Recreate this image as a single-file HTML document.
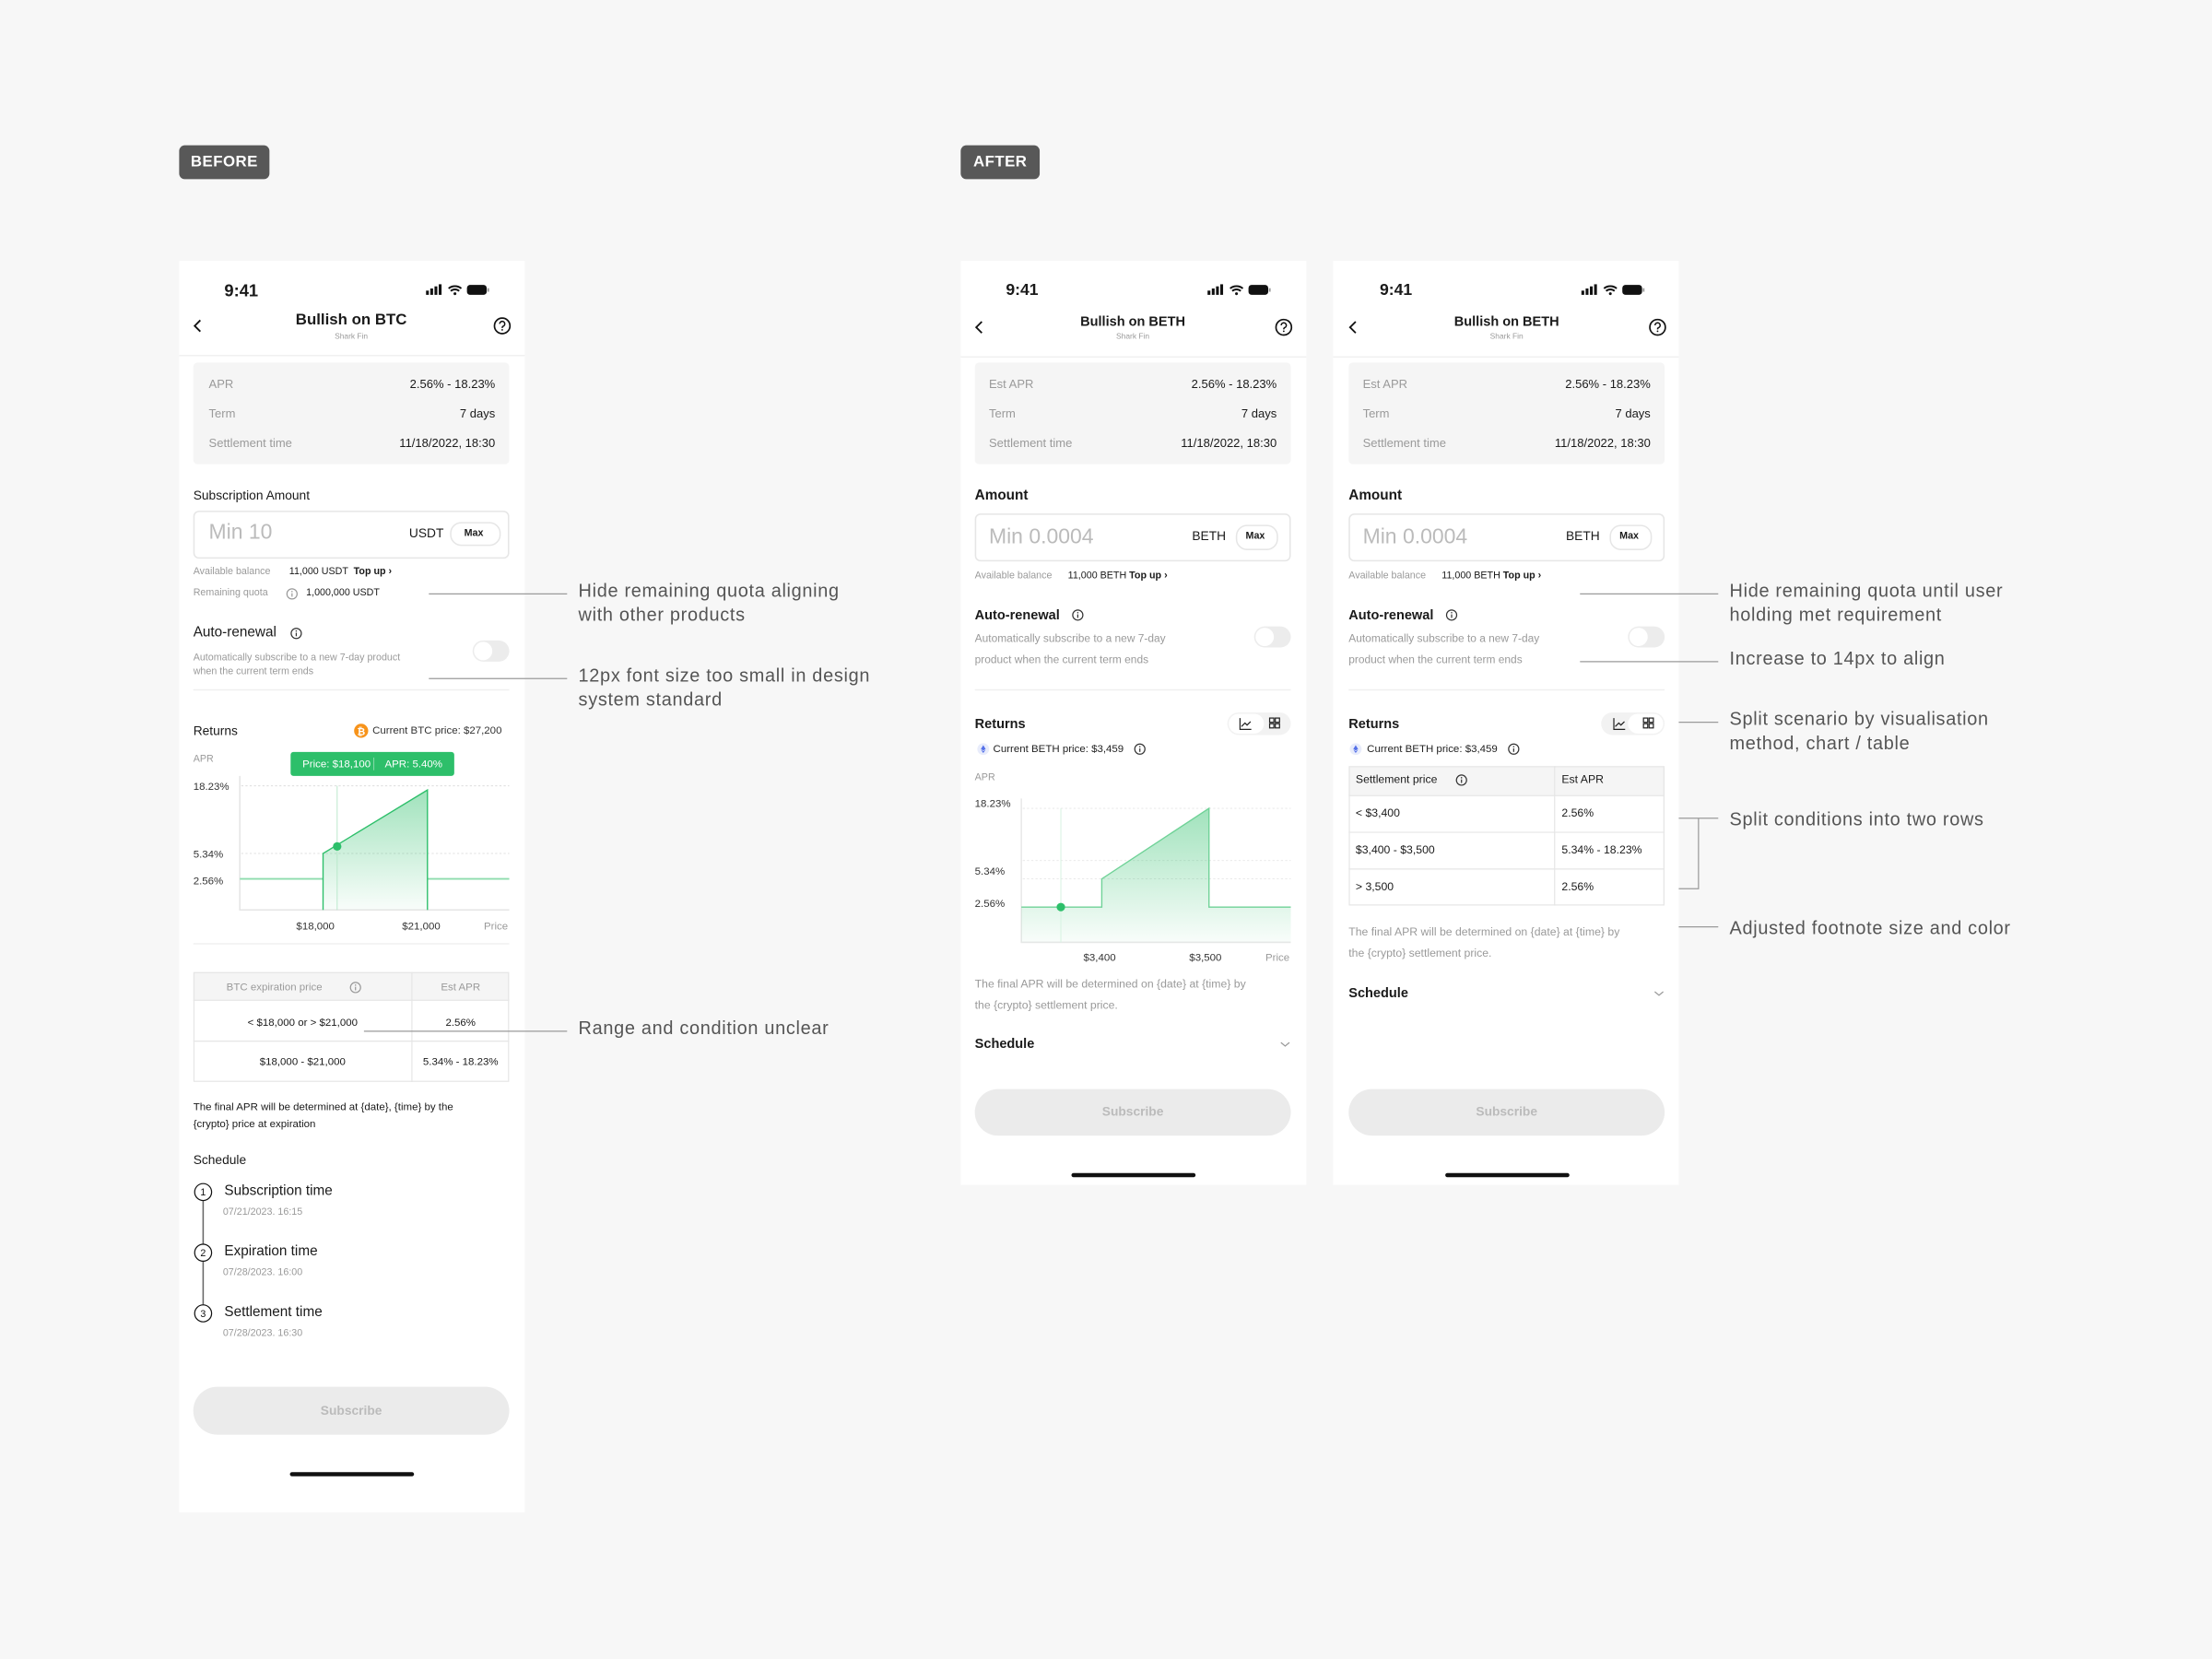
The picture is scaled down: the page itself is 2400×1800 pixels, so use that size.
<!DOCTYPE html>
<html><head><meta charset="utf-8">
<style>
html,body{margin:0;padding:0;background:#f7f7f7;}
#wrap{position:relative;width:2400px;height:1800px;overflow:hidden;background:#f7f7f7;}
#pg{position:absolute;left:0;top:0;width:1568px;height:1176px;transform:scale(1.530612);transform-origin:0 0;font-family:"Liberation Sans",Arial,sans-serif;color:#1a1a1a;}
.t{position:absolute;white-space:nowrap;line-height:1;}
.ph{position:absolute;background:#fff;}
.g{color:#9a9a9a;}
.b{font-weight:bold;}
.r{text-align:right;}
.c{text-align:center;}
.ann{position:absolute;font-size:13px;color:#555;line-height:17px;letter-spacing:0.45px;white-space:nowrap;}
</style></head><body>
<div id="wrap"><div id="pg">

<div style="position:absolute;left:127px;top:103px;width:64px;height:24px;background:#585858;border-radius:4px;color:#fff;font-weight:bold;font-size:11px;line-height:25px;text-align:center;letter-spacing:0.3px">BEFORE</div>
<div style="position:absolute;left:681px;top:103px;width:56px;height:24px;background:#585858;border-radius:4px;color:#fff;font-weight:bold;font-size:11px;line-height:25px;text-align:center;letter-spacing:0.3px">AFTER</div>

<div class="ph" style="left:127px;top:185px;width:245px;height:887px"></div>
<div class="ph" style="left:681px;top:185px;width:245px;height:655px"></div>
<div class="ph" style="left:945px;top:185px;width:245px;height:655px"></div>

<div style="position:absolute;left:137px;top:257px;width:224px;height:72px;background:#f5f5f5;border-radius:3px"></div>
<div style="position:absolute;left:691px;top:257px;width:224px;height:72px;background:#f5f5f5;border-radius:3px"></div>
<div style="position:absolute;left:956px;top:257px;width:224px;height:72px;background:#f5f5f5;border-radius:3px"></div>
<div style="position:absolute;left:137px;top:362px;width:222px;height:32px;border:1px solid #e6e6e6;border-radius:4px"></div>
<div style="position:absolute;left:319px;top:370px;width:34px;height:15px;border:1px solid #e6e6e6;border-radius:8px"></div>
<div style="position:absolute;left:691px;top:364px;width:222px;height:32px;border:1px solid #e6e6e6;border-radius:4px"></div>
<div style="position:absolute;left:876px;top:372px;width:28px;height:16px;border:1px solid #e6e6e6;border-radius:8px"></div>
<div style="position:absolute;left:956px;top:364px;width:222px;height:32px;border:1px solid #e6e6e6;border-radius:4px"></div>
<div style="position:absolute;left:1141px;top:372px;width:28px;height:16px;border:1px solid #e6e6e6;border-radius:8px"></div>
<div style="position:absolute;left:335px;top:454px;width:26px;height:15px;background:#ececec;border-radius:8px"><div style="position:absolute;left:1px;top:1px;width:13px;height:13px;border-radius:50%;background:#fff"></div></div>
<div style="position:absolute;left:889px;top:444px;width:26px;height:15px;background:#ececec;border-radius:8px"><div style="position:absolute;left:1px;top:1px;width:13px;height:13px;border-radius:50%;background:#fff"></div></div>
<div style="position:absolute;left:1154px;top:444px;width:26px;height:15px;background:#ececec;border-radius:8px"><div style="position:absolute;left:1px;top:1px;width:13px;height:13px;border-radius:50%;background:#fff"></div></div>
<div style="position:absolute;left:870px;top:505px;width:45px;height:16px;background:#f2f2f2;border-radius:8px"><div style="position:absolute;left:1px;top:1px;width:25px;height:14px;background:#fff;border-radius:7px"></div></div>
<div style="position:absolute;left:1135px;top:505px;width:45px;height:16px;background:#f2f2f2;border-radius:8px"><div style="position:absolute;left:19px;top:1px;width:25px;height:14px;background:#fff;border-radius:7px"></div></div>
<div style="position:absolute;left:206px;top:533px;width:116px;height:17px;background:#2dbf6a;border-radius:2px"></div>
<div style="position:absolute;left:137px;top:689px;width:224px;height:20px;background:#f5f5f5"></div>
<div style="position:absolute;left:956px;top:543px;width:224px;height:21px;background:#f5f5f5"></div>
<div style="position:absolute;left:137px;top:983px;width:224px;height:34px;background:#ebebeb;border-radius:17px"></div>
<div style="position:absolute;left:691px;top:772px;width:224px;height:33px;background:#ebebeb;border-radius:17px"></div>
<div style="position:absolute;left:956px;top:772px;width:224px;height:33px;background:#ebebeb;border-radius:17px"></div>

<svg style="position:absolute;left:0;top:0" width="1568" height="1176" viewBox="0 0 1568 1176">
<defs>
<linearGradient id="gr" x1="0" y1="0" x2="0" y2="1"><stop offset="0" stop-color="#2dbf6a" stop-opacity="0.45"/><stop offset="1" stop-color="#2dbf6a" stop-opacity="0.03"/></linearGradient>
<g id="status"><rect x="0" y="4" width="2" height="3" fill="#111"/><rect x="3" y="2.5" width="2" height="4.5" fill="#111"/><rect x="6" y="1" width="2" height="6" fill="#111"/><rect x="9" y="-0.5" width="2" height="7.5" fill="#111"/>
<path d="M16 2.5a7 7 0 0 1 9 0M17.5 4.3a4.5 4.5 0 0 1 6 0" stroke="#111" stroke-width="1.3" fill="none"/><circle cx="20.5" cy="6.2" r="1" fill="#111"/>
<rect x="29" y="0" width="14" height="7" rx="2.2" fill="#111"/><rect x="43.5" y="2.3" width="1.2" height="2.5" fill="#999"/></g>
<g id="help"><circle r="5.5" fill="none" stroke="#111" stroke-width="1.1"/><path d="M-1.8 -1.4a1.8 1.8 0 1 1 2.4 1.7c-0.6 0.3-0.6 0.6-0.6 1.2" fill="none" stroke="#111" stroke-width="1"/><circle cx="0" cy="2.8" r="0.6" fill="#111"/></g>
<g id="info"><circle r="3.6" fill="none" stroke="#333" stroke-width="0.8"/><path d="M0 -0.5V2" stroke="#333" stroke-width="0.8"/><circle cy="-1.7" r="0.5" fill="#333"/></g>
<g id="infog"><circle r="3.6" fill="none" stroke="#999" stroke-width="0.8"/><path d="M0 -0.5V2" stroke="#999" stroke-width="0.8"/><circle cy="-1.7" r="0.5" fill="#999"/></g>
<g id="eth"><circle r="4.2" fill="#e8ecfb"/><path d="M0 -2.8L-1.7 0L0 1L1.7 0Z M-1.7 0.5L0 2.8L1.7 0.5L0 1.5Z" fill="#5470e8"/></g>
</defs>
<use href="#status" x="302" y="202"/>
<use href="#status" x="856" y="202"/>
<use href="#status" x="1121" y="202"/>
<path d="M142 227l-4 4 4 4" stroke="#111" stroke-width="1.2" fill="none"/>
<path d="M696 228l-4 4 4 4" stroke="#111" stroke-width="1.2" fill="none"/>
<path d="M961 228l-4 4 4 4" stroke="#111" stroke-width="1.2" fill="none"/>
<use href="#help" x="356" y="231"/>
<use href="#help" x="910" y="232"/>
<use href="#help" x="1175" y="232"/>
<path d="M127 252H372M681 253H926M945 253H1190" stroke="#f0f0f0" stroke-width="1"/>
<path d="M137 489H361M137 669H361M691 489H915M956 489H1180" stroke="#f0f0f0" stroke-width="1"/>

<use href="#infog" x="207" y="421"/>
<use href="#info" x="210" y="449"/>
<use href="#info" x="764" y="436"/>
<use href="#info" x="1029" y="436"/>
<use href="#infog" x="252" y="700"/>
<use href="#info" x="808" y="531"/>
<use href="#info" x="1073" y="531"/>
<use href="#info" x="1036" y="553"/>
<use href="#eth" x="697" y="531"/>
<use href="#eth" x="961" y="531"/>
<circle cx="256" cy="518" r="5" fill="#f7931a"/>
<text x="256" y="521" font-size="7" font-weight="bold" fill="#fff" text-anchor="middle" font-family="Liberation Sans">₿</text>

<g stroke="#222" stroke-width="0.8" fill="none">
<path d="M879 509v8h8M880 515l2.5-2.5 1.5 1.5 2.5-2.5"/>
<rect x="900" y="509" width="3" height="3"/><rect x="904" y="509" width="3" height="3"/><rect x="900" y="513" width="3" height="3"/><rect x="904" y="513" width="3" height="3"/>
<path d="M1144 509v8h8M1145 515l2.5-2.5 1.5 1.5 2.5-2.5"/>
<rect x="1165" y="509" width="3" height="3"/><rect x="1169" y="509" width="3" height="3"/><rect x="1165" y="513" width="3" height="3"/><rect x="1169" y="513" width="3" height="3"/>
</g>

<path d="M170 550V645H361" stroke="#e5e5e5" stroke-width="1" fill="none"/>
<path d="M171 557H361M171 605H361" stroke="#e0e0e0" stroke-width="0.7" stroke-dasharray="1.5 1.5"/>
<path d="M229 645V605L303 560V645Z" fill="url(#gr)"/>
<path d="M170 623H229M303 623H361" stroke="#8fdcae" stroke-width="1.2" fill="none"/>
<path d="M229 645V605L303 560V645" stroke="#2dbf6a" stroke-width="0.9" fill="none"/>
<path d="M239 557V645" stroke="#b6e8c9" stroke-width="0.6"/>
<circle cx="239" cy="600" r="3" fill="#2dbf6a"/>
<path d="M265 537V546" stroke="#8fdcae" stroke-width="0.6"/>

<path d="M724 566V668H915" stroke="#e8e8e8" stroke-width="1" fill="none"/>
<path d="M725 573H915M725 610H915M725 623H915" stroke="#e6e6e6" stroke-width="0.6" stroke-dasharray="1.5 1.5"/>
<path d="M724 668V643H781V623L857 573V643H915V668Z" fill="url(#gr)"/>
<path d="M724 643H781V623L857 573V643H915" stroke="#6fd297" stroke-width="0.9" fill="none"/>
<path d="M752 573V668" stroke="#d5f2e0" stroke-width="0.6"/>
<circle cx="752" cy="643" r="3" fill="#2dbf6a"/>

<g stroke="#e6e6e6" stroke-width="0.8" fill="none">
<rect x="137.5" y="689.5" width="223" height="77"/>
<path d="M292 689V767M137 709H361M137 738H361"/>
<rect x="956.5" y="543.5" width="223" height="98"/>
<path d="M1102 543V642M956 564H1180M956 590H1180M956 616H1180"/>
</g>

<path d="M144 851V882M144 894V925" stroke="#666" stroke-width="1"/>
<g fill="#fff" stroke="#111" stroke-width="0.8"><circle cx="144" cy="845" r="6"/><circle cx="144" cy="888" r="6"/><circle cx="144" cy="931" r="6"/></g>
<g font-family="Liberation Sans" font-size="7" text-anchor="middle" fill="#111"><text x="144" y="847.5">1</text><text x="144" y="890.5">2</text><text x="144" y="933.5">3</text></g>

<path d="M908 739l3 2.5 3-2.5M1173 703l3 2.5 3-2.5" stroke="#999" stroke-width="0.8" fill="none"/>
<path d="M207 1045H292M761 833H846M1026 833H1111" stroke="#111" stroke-width="3" stroke-linecap="round"/>

<g stroke="#9a9a9a" stroke-width="0.8" fill="none">
<path d="M304 421H402M304 481H402M258 731H402"/>
<path d="M1120 421H1218M1120 469H1218M1190 512H1218M1190 580H1218M1204 580V630H1190M1190 657H1218"/>
</g>
</svg>

<!-- BEFORE -->
<div class="t b" style="left:159px;top:200px;font-size:12px">9:41</div>
<div class="t b c" style="left:180px;width:138px;top:222px;font-size:11px">Bullish on BTC</div>
<div class="t c g" style="left:200px;width:98px;top:237px;font-size:5.5px">Shark Fin</div>
<div class="t g" style="left:148px;top:268px;font-size:8.5px">APR</div>
<div class="t r" style="left:250px;width:101px;top:268px;font-size:8.5px">2.56% - 18.23%</div>
<div class="t g" style="left:148px;top:289px;font-size:8.5px">Term</div>
<div class="t r" style="left:250px;width:101px;top:289px;font-size:8.5px">7 days</div>
<div class="t g" style="left:148px;top:310px;font-size:8.5px">Settlement time</div>
<div class="t r" style="left:250px;width:101px;top:310px;font-size:8.5px">11/18/2022, 18:30</div>
<div class="t" style="left:137px;top:347px;font-size:9px">Subscription Amount</div>
<div class="t" style="left:148px;top:370px;font-size:15px;color:#bbb">Min 10</div>
<div class="t" style="left:290px;top:374px;font-size:9px">USDT</div>
<div class="t b" style="left:329px;top:375px;font-size:7px">Max</div>
<div class="t g" style="left:137px;top:402px;font-size:7px">Available balance</div>
<div class="t" style="left:205px;top:402px;font-size:7px">11,000 USDT &nbsp;<b>Top up ›</b></div>
<div class="t g" style="left:137px;top:417px;font-size:7px">Remaining quota</div>
<div class="t" style="left:217px;top:417px;font-size:7px">1,000,000 USDT</div>
<div class="t" style="left:137px;top:444px;font-size:10px">Auto-renewal</div>
<div class="t g" style="left:137px;top:462px;font-size:7px;line-height:10px">Automatically subscribe to a new 7-day product<br>when the current term ends</div>
<div class="t" style="left:137px;top:514px;font-size:9px">Returns</div>
<div class="t" style="left:264px;top:514px;font-size:7.5px;color:#333">Current BTC price: $27,200</div>
<div class="t g" style="left:137px;top:535px;font-size:7px">APR</div>
<div class="t" style="left:206px;width:116px;top:538px;font-size:7.5px;color:#fff;text-align:center">Price: $18,100 &nbsp;&nbsp;&nbsp; APR: 5.40%</div>
<div class="t" style="left:137px;top:554px;font-size:7.5px;color:#333">18.23%</div>
<div class="t" style="left:137px;top:602px;font-size:7.5px;color:#333">5.34%</div>
<div class="t" style="left:137px;top:621px;font-size:7.5px;color:#333">2.56%</div>
<div class="t" style="left:210px;top:653px;font-size:7.5px;color:#333">$18,000</div>
<div class="t" style="left:285px;top:653px;font-size:7.5px;color:#333">$21,000</div>
<div class="t g" style="left:343px;top:653px;font-size:7.5px">Price</div>
<div class="t g c" style="left:137px;width:115px;top:696px;font-size:7.5px">BTC expiration price</div>
<div class="t g c" style="left:292px;width:69px;top:696px;font-size:7.5px">Est APR</div>
<div class="t c" style="left:137px;width:155px;top:721px;font-size:7.5px">&lt; $18,000 or &gt; $21,000</div>
<div class="t c" style="left:292px;width:69px;top:721px;font-size:7.5px">2.56%</div>
<div class="t c" style="left:137px;width:155px;top:749px;font-size:7.5px">$18,000 - $21,000</div>
<div class="t c" style="left:292px;width:69px;top:749px;font-size:7.5px">5.34% - 18.23%</div>
<div class="t" style="left:137px;top:779px;font-size:7.5px;line-height:12px">The final APR will be determined at {date}, {time} by the<br>{crypto} price at expiration</div>
<div class="t" style="left:137px;top:818px;font-size:9px">Schedule</div>
<div class="t" style="left:159px;top:840px;font-size:10px">Subscription time</div>
<div class="t g" style="left:158px;top:856px;font-size:7px">07/21/2023. 16:15</div>
<div class="t" style="left:159px;top:883px;font-size:10px">Expiration time</div>
<div class="t g" style="left:158px;top:899px;font-size:7px">07/28/2023. 16:00</div>
<div class="t" style="left:159px;top:926px;font-size:10px">Settlement time</div>
<div class="t g" style="left:158px;top:942px;font-size:7px">07/28/2023. 16:30</div>
<div class="t b c" style="left:137px;width:224px;top:996px;font-size:9px;color:#bbb">Subscribe</div>

<!-- AFTER -->
<div class="t b" style="left:713px;top:201px;font-size:11.5px">9:41</div>
<div class="t b" style="left:978px;top:201px;font-size:11.5px">9:41</div>
<div class="t b c" style="left:733px;width:140px;top:224px;font-size:9.5px">Bullish on BETH</div>
<div class="t b c" style="left:998px;width:140px;top:224px;font-size:9.5px">Bullish on BETH</div>
<div class="t c g" style="left:753px;width:100px;top:237px;font-size:5.5px">Shark Fin</div>
<div class="t c g" style="left:1018px;width:100px;top:237px;font-size:5.5px">Shark Fin</div>

<div class="t g" style="left:701px;top:268px;font-size:8.5px">Est APR</div>
<div class="t r" style="left:800px;width:105px;top:268px;font-size:8.5px">2.56% - 18.23%</div>
<div class="t g" style="left:701px;top:289px;font-size:8.5px">Term</div>
<div class="t r" style="left:800px;width:105px;top:289px;font-size:8.5px">7 days</div>
<div class="t g" style="left:701px;top:310px;font-size:8.5px">Settlement time</div>
<div class="t r" style="left:800px;width:105px;top:310px;font-size:8.5px">11/18/2022, 18:30</div>
<div class="t g" style="left:966px;top:268px;font-size:8.5px">Est APR</div>
<div class="t r" style="left:1065px;width:105px;top:268px;font-size:8.5px">2.56% - 18.23%</div>
<div class="t g" style="left:966px;top:289px;font-size:8.5px">Term</div>
<div class="t r" style="left:1065px;width:105px;top:289px;font-size:8.5px">7 days</div>
<div class="t g" style="left:966px;top:310px;font-size:8.5px">Settlement time</div>
<div class="t r" style="left:1065px;width:105px;top:310px;font-size:8.5px">11/18/2022, 18:30</div>

<div class="t" style="left:691px;top:347px;font-size:10px;font-weight:bold">Amount</div>
<div class="t" style="left:956px;top:347px;font-size:10px;font-weight:bold">Amount</div>
<div class="t" style="left:701px;top:373px;font-size:15px;color:#bbb">Min 0.0004</div>
<div class="t" style="left:966px;top:373px;font-size:15px;color:#bbb">Min 0.0004</div>
<div class="t" style="left:845px;top:376px;font-size:9px">BETH</div>
<div class="t" style="left:1110px;top:376px;font-size:9px">BETH</div>
<div class="t b" style="left:883px;top:377px;font-size:7px">Max</div>
<div class="t b" style="left:1148px;top:377px;font-size:7px">Max</div>
<div class="t g" style="left:691px;top:405px;font-size:7px">Available balance</div>
<div class="t" style="left:757px;top:405px;font-size:7px">11,000 BETH <b>Top up ›</b></div>
<div class="t g" style="left:956px;top:405px;font-size:7px">Available balance</div>
<div class="t" style="left:1022px;top:405px;font-size:7px">11,000 BETH <b>Top up ›</b></div>
<div class="t" style="left:691px;top:432px;font-size:9.5px;font-weight:bold">Auto-renewal</div>
<div class="t" style="left:956px;top:432px;font-size:9.5px;font-weight:bold">Auto-renewal</div>
<div class="t g" style="left:691px;top:445px;font-size:7.8px;line-height:15px">Automatically subscribe to a new 7-day<br>product when the current term ends</div>
<div class="t g" style="left:956px;top:445px;font-size:7.8px;line-height:15px">Automatically subscribe to a new 7-day<br>product when the current term ends</div>
<div class="t" style="left:691px;top:509px;font-size:9.5px;font-weight:bold">Returns</div>
<div class="t" style="left:956px;top:509px;font-size:9.5px;font-weight:bold">Returns</div>
<div class="t" style="left:704px;top:527px;font-size:7.5px;color:#222">Current BETH price: $3,459</div>
<div class="t" style="left:969px;top:527px;font-size:7.5px;color:#222">Current BETH price: $3,459</div>

<div class="t g" style="left:691px;top:548px;font-size:7px">APR</div>
<div class="t" style="left:691px;top:566px;font-size:7.5px;color:#333">18.23%</div>
<div class="t" style="left:691px;top:614px;font-size:7.5px;color:#333">5.34%</div>
<div class="t" style="left:691px;top:637px;font-size:7.5px;color:#333">2.56%</div>
<div class="t" style="left:768px;top:675px;font-size:7.5px;color:#333">$3,400</div>
<div class="t" style="left:843px;top:675px;font-size:7.5px;color:#333">$3,500</div>
<div class="t g" style="left:897px;top:675px;font-size:7.5px">Price</div>
<div class="t g" style="left:691px;top:690px;font-size:8px;line-height:15px">The final APR will be determined on {date} at {time} by<br>the {crypto} settlement price.</div>
<div class="t" style="left:691px;top:736px;font-size:9.5px;font-weight:bold">Schedule</div>
<div class="t b c" style="left:691px;width:224px;top:784px;font-size:9px;color:#bbb">Subscribe</div>

<div class="t" style="left:961px;top:549px;font-size:8px">Settlement price</div>
<div class="t" style="left:1107px;top:549px;font-size:8px">Est APR</div>
<div class="t" style="left:961px;top:573px;font-size:8px">&lt; $3,400</div>
<div class="t" style="left:1107px;top:573px;font-size:8px">2.56%</div>
<div class="t" style="left:961px;top:599px;font-size:8px">$3,400 - $3,500</div>
<div class="t" style="left:1107px;top:599px;font-size:8px">5.34% - 18.23%</div>
<div class="t" style="left:961px;top:625px;font-size:8px">&gt; 3,500</div>
<div class="t" style="left:1107px;top:625px;font-size:8px">2.56%</div>
<div class="t g" style="left:956px;top:653px;font-size:8px;line-height:15px">The final APR will be determined on {date} at {time} by<br>the {crypto} settlement price.</div>
<div class="t" style="left:956px;top:700px;font-size:9.5px;font-weight:bold">Schedule</div>
<div class="t b c" style="left:956px;width:224px;top:784px;font-size:9px;color:#bbb">Subscribe</div>

<div class="ann" style="left:410px;top:410px">Hide remaining quota aligning<br>with other products</div>
<div class="ann" style="left:410px;top:470px">12px font size too small in design<br>system standard</div>
<div class="ann" style="left:410px;top:720px">Range and condition unclear</div>
<div class="ann" style="left:1226px;top:410px">Hide remaining quota until user<br>holding met requirement</div>
<div class="ann" style="left:1226px;top:458px">Increase to 14px to align</div>
<div class="ann" style="left:1226px;top:501px">Split scenario by visualisation<br>method, chart / table</div>
<div class="ann" style="left:1226px;top:572px">Split conditions into two rows</div>
<div class="ann" style="left:1226px;top:649px">Adjusted footnote size and color</div>

</div></div>
</body></html>
